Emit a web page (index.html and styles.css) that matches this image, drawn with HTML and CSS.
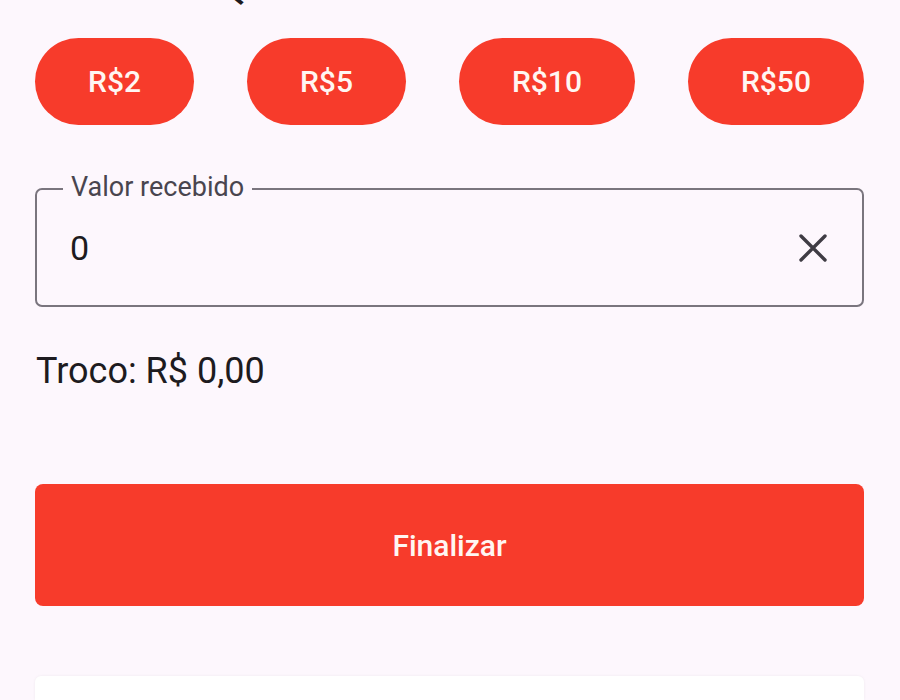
FILE: index.html
```html
<!DOCTYPE html>
<html lang="pt-BR">
<head>
<meta charset="utf-8">
<link rel="stylesheet" href="styles.css">
</head>
<body>
<main class="screen">
  <h1 class="title">Qual é o valor recebido?</h1>
  <div class="chips">
    <button class="chip">R$2</button>
    <button class="chip">R$5</button>
    <button class="chip">R$10</button>
    <button class="chip">R$50</button>
  </div>
  <div class="field">
    <span class="field-label">Valor recebido</span>
    <span class="field-value">0</span>
    <svg class="clear" width="32" height="32" viewBox="0 0 32 32"><path d="M4 4 L28 28 M28 4 L4 28" stroke="#3f3c44" stroke-width="3.4" stroke-linecap="round" fill="none"/></svg>
  </div>
  <p class="troco">Troco: R$ 0,00</p>
  <button class="finish">Finalizar</button>
  <div class="card"></div>
</main>
</body>
</html>
```
FILE: styles.css
```css
html, body {
  margin: 0;
  padding: 0;
  background: #fdf7fd;
  overflow: hidden;
}
.screen {
  width: 900px;
  height: 700px;
  box-sizing: border-box;
  padding: 0 36px 0 35px;
  font-family: Roboto, "Noto Sans", sans-serif;
  display: flex;
  flex-direction: column;
  overflow: hidden;
}
.screen > * {
  flex-shrink: 0;
}
.title {
  margin: -40px 0 0 0;
  height: 50px;
  line-height: 50px;
  font-size: 44px;
  font-weight: 400;
  text-align: center;
  color: #1d1b20;
}
.chips {
  margin-top: 28px;
  display: flex;
  justify-content: space-between;
}
.chip {
  height: 87px;
  border: none;
  border-radius: 44px;
  background: #f73b2b;
  color: #fff6f2;
  font-family: Roboto, sans-serif;
  font-weight: 500;
  font-size: 30px;
  padding: 0 53px;
}
.field {
  position: relative;
  margin-top: 63px;
  height: 119px;
  box-sizing: border-box;
  border: 2px solid #7a757e;
  border-radius: 7px;
  display: flex;
  align-items: center;
  justify-content: space-between;
  padding: 0 33px 0 33px;
}
.field-label {
  position: absolute;
  left: 26px;
  top: -19px;
  padding: 0 8px;
  background: #fdf7fd;
  font-size: 27px;
  color: #49454f;
  line-height: 32px;
}
.field-value {
  font-size: 34px;
  color: #1d1b20;
}
.clear {
  display: block;
}
.troco {
  margin: 42px 0 0 1px;
  font-size: 36px;
  line-height: 44px;
  color: #1d1b20;
}
.finish {
  margin-top: 91px;
  height: 122px;
  border: none;
  border-radius: 8px;
  background: #f73b2b;
  color: #fff6f2;
  font-family: Roboto, sans-serif;
  font-weight: 500;
  font-size: 30px;
}
.card {
  margin-top: 70px;
  height: 24px;
  background: #ffffff;
  border-radius: 6px 6px 0 0;
  box-shadow: 0 0 3px rgba(0,0,0,0.06);
}
```
